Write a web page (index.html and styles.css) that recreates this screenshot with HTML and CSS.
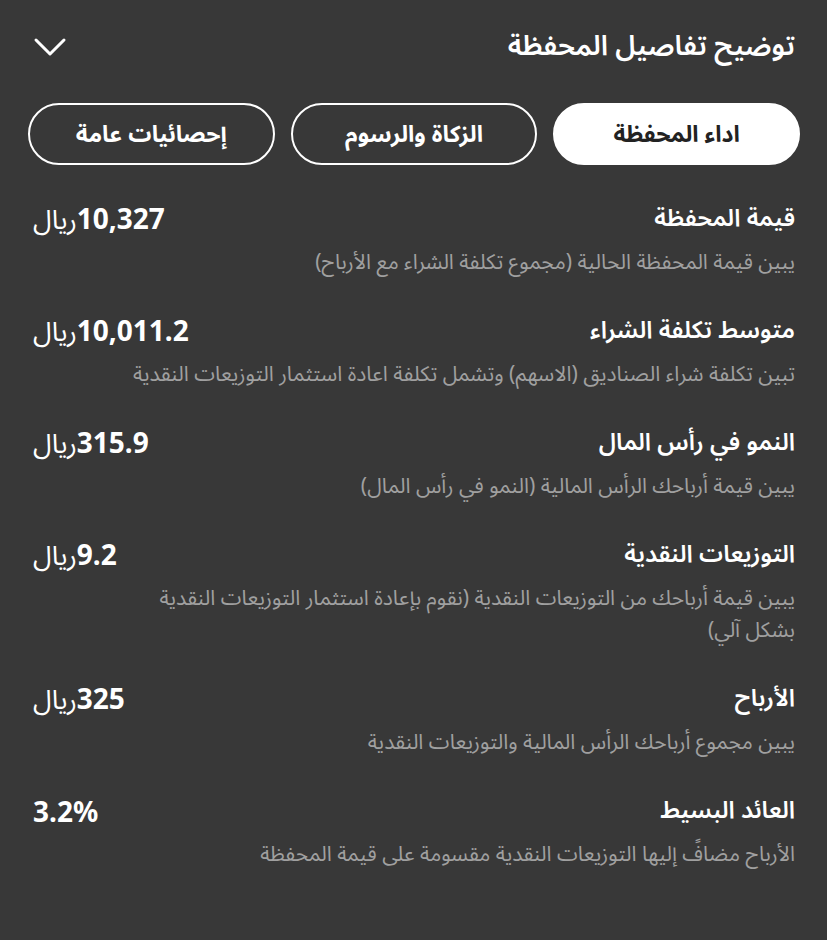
FILE: index.html
```html
<!DOCTYPE html>
<html lang="ar" dir="rtl">
<head>
<meta charset="utf-8">
<link rel="stylesheet" href="styles.css">
</head>
<body>
<div class="sheet">
  <header class="head">
    <h1 class="head-title">توضيح تفاصيل المحفظة</h1>
    <button class="head-toggle" aria-label="إغلاق">
      <svg width="34" height="22" viewBox="0 0 34 22"><path d="M3 4 L17 18 L31 4" fill="none" stroke="#fff" stroke-width="3" stroke-linecap="round" stroke-linejoin="round"/></svg>
    </button>
  </header>
  <nav class="tabs">
    <button class="tab tab-active">اداء المحفظة</button>
    <button class="tab">الزكاة والرسوم</button>
    <button class="tab">إحصائيات عامة</button>
  </nav>
  <ul class="items">
    <li class="item">
      <div class="item-top"><span class="item-title">قيمة المحفظة</span><span class="item-value"><b class="num">10,327</b><span class="cur">ريال</span></span></div>
      <p class="item-desc">يبين قيمة المحفظة الحالية (مجموع تكلفة الشراء مع الأرباح)</p>
    </li>
    <li class="item">
      <div class="item-top"><span class="item-title">متوسط تكلفة الشراء</span><span class="item-value"><b class="num">10,011.2</b><span class="cur">ريال</span></span></div>
      <p class="item-desc">تبين تكلفة شراء الصناديق (الاسهم) وتشمل تكلفة اعادة استثمار التوزيعات النقدية</p>
    </li>
    <li class="item">
      <div class="item-top"><span class="item-title">النمو في رأس المال</span><span class="item-value"><b class="num">315.9</b><span class="cur">ريال</span></span></div>
      <p class="item-desc">يبين قيمة أرباحك الرأس المالية (النمو في رأس المال)</p>
    </li>
    <li class="item">
      <div class="item-top"><span class="item-title">التوزيعات النقدية</span><span class="item-value"><b class="num">9.2</b><span class="cur">ريال</span></span></div>
      <p class="item-desc item-desc-wrap">يبين قيمة أرباحك من التوزيعات النقدية (نقوم بإعادة استثمار التوزيعات النقدية بشكل آلي)</p>
    </li>
    <li class="item">
      <div class="item-top"><span class="item-title">الأرباح</span><span class="item-value"><b class="num">325</b><span class="cur">ريال</span></span></div>
      <p class="item-desc">يبين مجموع أرباحك الرأس المالية والتوزيعات النقدية</p>
    </li>
    <li class="item">
      <div class="item-top"><span class="item-title">العائد البسيط</span><span class="item-value"><b class="num">3.2%</b></span></div>
      <p class="item-desc">الأرباح مضافً إليها التوزيعات النقدية مقسومة على قيمة المحفظة</p>
    </li>
  </ul>
</div>
</body>
</html>
```
FILE: styles.css
```css
* { box-sizing: border-box; }
html, body { margin: 0; padding: 0; }
body {
  background: #383838;
  color: #fff;
  font-family: "Noto Sans Arabic", "Noto Naskh Arabic", "DejaVu Sans", sans-serif;
  width: 827px;
  height: 940px;
  overflow: hidden;
}
.sheet { padding: 0 27px 0 28px; }
.head {
  display: flex;
  align-items: center;
  justify-content: space-between;
  height: 94px;
  padding: 0 5px 0 5px;
}
.head-title {
  margin: 0;
  font-size: 28px;
  font-weight: 600;
  line-height: 40px;
}
.head-toggle {
  background: none;
  border: 0;
  padding: 0;
  width: 34px;
  height: 22px;
  display: block;
}
.head-toggle svg { display: block; }
.tabs {
  display: grid;
  grid-template-columns: repeat(3, 1fr);
  gap: 16px;
  margin-top: 9px;
}
.tab {
  height: 62px;
  border: 2px solid #fff;
  border-radius: 31px;
  background: transparent;
  color: #fff;
  font-family: inherit;
  font-size: 23px;
  font-weight: 700;
  padding: 0;
}
.tab-active { background: #fff; color: #222; }
.items {
  list-style: none;
  margin: 37px 0 0;
  padding: 0 5px;
  display: flex;
  flex-direction: column;
  gap: 36px;
}
.item-top {
  display: flex;
  justify-content: space-between;
  align-items: center;
  height: 34px;
}
.item-title { font-size: 24px; font-weight: 600; line-height: 34px; }
.item-value { display: flex; align-items: baseline; font-size: 28px; line-height: 34px; }
.num { font-family: "Noto Sans", "Inter", sans-serif; font-weight: 700; direction: ltr; }
.cur { font-weight: 400; font-size: 27px; }
.item-desc {
  margin: 10px 0 0;
  color: #a0a0a0;
  font-size: 21px;
  line-height: 32px;
}
.item-desc-wrap { padding-left: 80px; }
```
